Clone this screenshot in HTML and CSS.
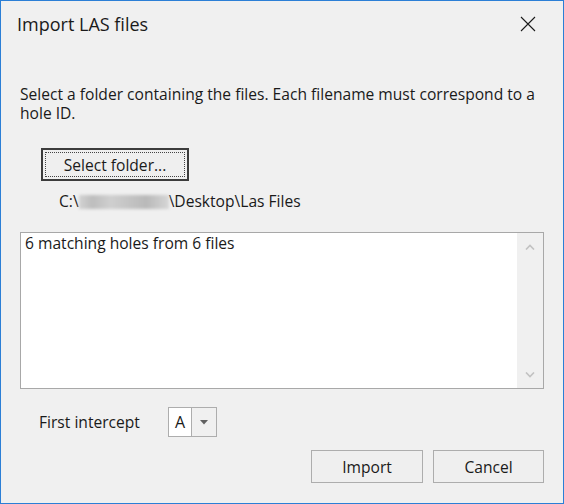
FILE: index.html
```html
<!DOCTYPE html>
<html lang="en">
<head>
<meta charset="utf-8">
<title>Import LAS files</title>
<link rel="stylesheet" href="styles.css">
</head>
<body>
<div class="dialog">
  <div class="titlebar">
    <span class="title">Import LAS files</span>
    <span class="close" aria-label="Close">
      <svg width="16" height="16" viewBox="0 0 16 16"><path d="M1 1 L15 15 M15 1 L1 15" stroke="#1a1a1a" stroke-width="1.1" fill="none"/></svg>
    </span>
  </div>
  <div class="body">
    <p class="desc">Select a folder containing the files. Each filename must correspond to a hole ID.</p>
    <div class="folder-row">
      <button class="btn btn-default" type="button"><span class="focus-rect">Select folder...</span></button>
    </div>
    <div class="path">C:\<span class="blur"></span>\Desktop\Las Files</div>
    <div class="listbox">
      <div class="list-content">6 matching holes from 6 files</div>
      <div class="scrollbar">
        <svg width="10" height="6" viewBox="0 0 10 6"><polyline points="1,5.5 5,1.5 9,5.5" fill="none" stroke="#c2c2c2" stroke-width="1.6"/></svg>
        <svg width="10" height="6" viewBox="0 0 10 6"><polyline points="1,0.5 5,4.5 9,0.5" fill="none" stroke="#c2c2c2" stroke-width="1.6"/></svg>
      </div>
    </div>
    <div class="intercept-row">
      <span class="label">First intercept</span>
      <div class="combo">
        <span class="combo-value">A</span>
        <span class="combo-btn"><svg width="8" height="5" viewBox="0 0 8 5"><polygon points="0,0 8,0 4,4.5" fill="#606060"/></svg></span>
      </div>
    </div>
    <div class="actions">
      <button class="btn btn-action" type="button">Import</button>
      <button class="btn btn-action btn-cancel" type="button">Cancel</button>
    </div>
  </div>
</div>
</body>
</html>
```

FILE: styles.css
```css
* { box-sizing: border-box; }
html, body { margin: 0; padding: 0; }
body {
  font-family: "Open Sans", "Noto Sans", sans-serif;
  font-size: 15.6px;
  color: #1a1a1a;
  background: #f0f0f0;
}
.dialog {
  width: 564px;
  height: 504px;
  border: 1px solid #2b7fd6;
  background: #f0f0f0;
  display: flex;
  flex-direction: column;
}
.titlebar {
  height: 44px;
  padding: 10px 0 0 16px;
  display: flex;
  justify-content: space-between;
  align-items: flex-start;
}
.title {
  font-size: 18px;
  line-height: 27px;
  color: #1a1a1a;
}
.close {
  width: 16px;
  height: 16px;
  margin: 5px 27px 0 0;
  display: flex;
}
.body {
  padding: 40px 19px 0 19px;
  display: flex;
  flex-direction: column;
}
.desc {
  margin: 0;
  line-height: 19px;
}
.folder-row {
  margin-top: 25px;
  display: flex;
}
.btn {
  font-family: inherit;
  font-size: 15.6px;
  color: #1a1a1a;
  background: #efefef;
  border: 1px solid #adadad;
  height: 33px;
  padding: 0;
  margin: 0;
}
.btn-default {
  margin-left: 21px;
  width: 148px;
  border: 2px solid #3c3c3c;
  padding: 2px;
  display: flex;
}
.focus-rect {
  flex: 1;
  border: 1px dotted #444;
  display: flex;
  align-items: center;
  justify-content: center;
}
.path {
  margin: 11px 0 0 39px;
  line-height: 19px;
  display: flex;
  align-items: center;
}
.blur {
  display: inline-block;
  width: 90px;
  height: 14px;
  background: linear-gradient(90deg, #d2d2d2 0%, #bdbdbd 15%, #cfcfcf 35%, #c4c4c4 55%, #b9b9b9 75%, #d6d6d6 100%);
  filter: blur(1.5px);
}
.listbox {
  margin-top: 21px;
  height: 157px;
  border: 1px solid #a8a8a8;
  background: #fff;
  display: flex;
}
.list-content {
  flex: 1;
  padding: 1px 0 0 4px;
  line-height: 19px;
}
.scrollbar {
  width: 26px;
  background: #f0f0f0;
  display: flex;
  flex-direction: column;
  justify-content: space-between;
  align-items: center;
  padding: 11px 0 10px 0;
}
.intercept-row {
  margin-top: 18px;
  display: flex;
  align-items: center;
}
.label {
  margin-left: 19px;
  width: 129px;
}
.combo {
  width: 49px;
  height: 30px;
  border: 1px solid #adadad;
  display: flex;
}
.combo-value {
  width: 23px;
  background: #fff;
  border-right: 1px solid #adadad;
  display: flex;
  align-items: center;
  justify-content: center;
  font-size: 16px;
}
.combo-btn {
  flex: 1;
  display: flex;
  align-items: center;
  justify-content: center;
}
.actions {
  margin-top: 13px;
  display: flex;
  justify-content: flex-end;
  gap: 10px;
}
.btn-action {
  width: 112px;
}
.btn-cancel {
  width: 111px;
}
```
